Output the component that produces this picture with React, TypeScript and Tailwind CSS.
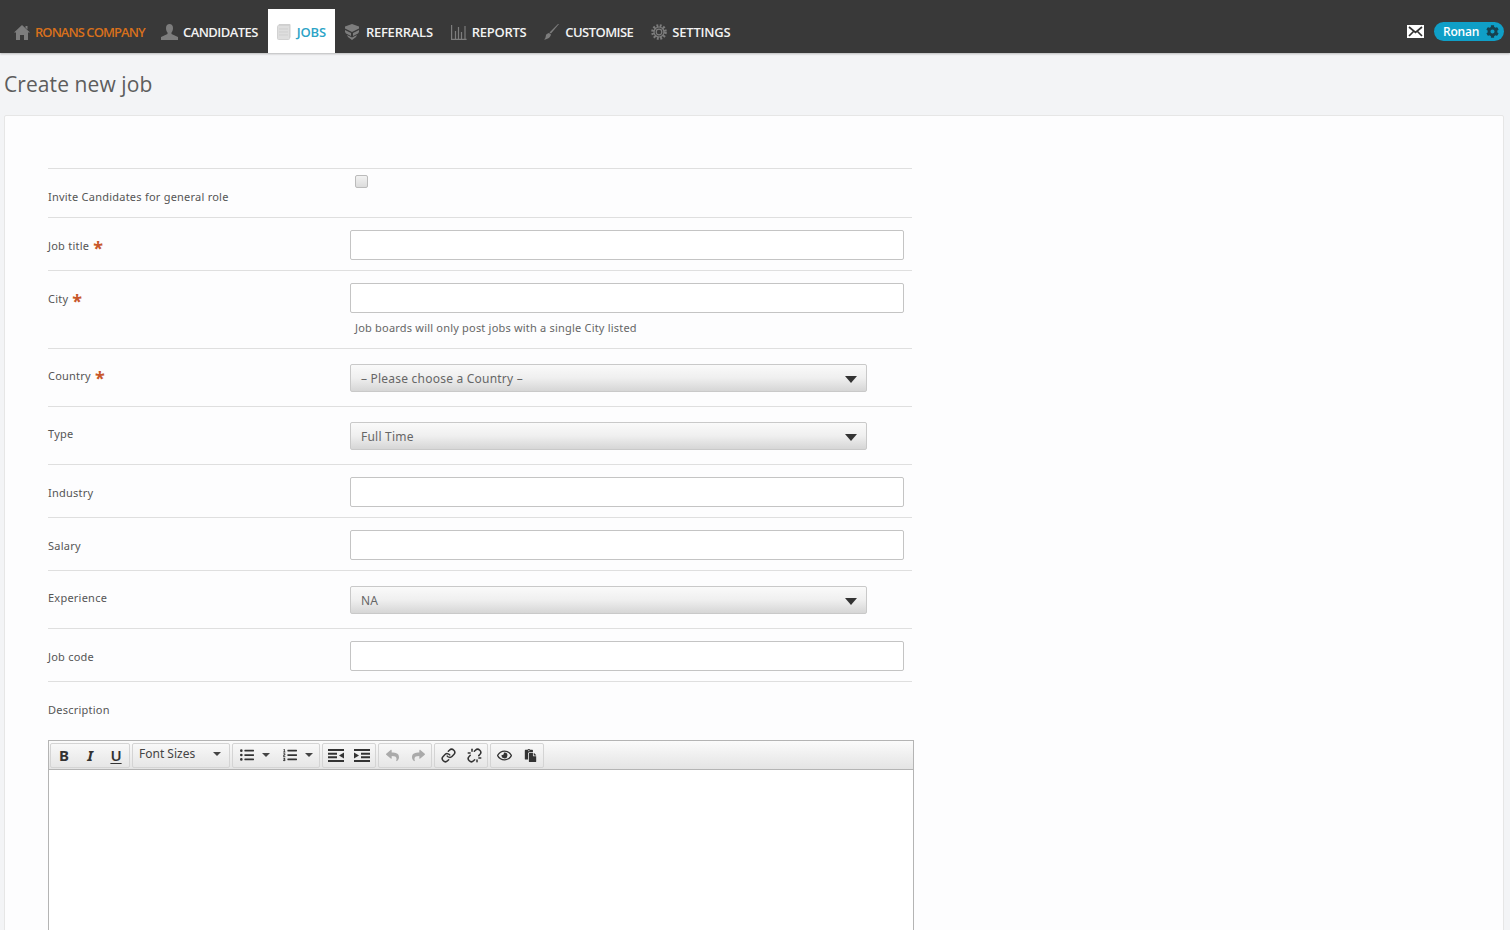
import React from "react";
import { FaCog, FaListUl, FaListOl, FaPaste, FaReply, FaShare, FaRegEye } from "react-icons/fa";
import { Link, Unlink } from "lucide-react";

const body = "font-['Noto_Sans',sans-serif]";

const Home = () => (
  <svg width="16" height="15" viewBox="0 0 16 15" fill="#7d7d7d"><path d="M8 0l8 7.500h-2V15h-4v-5H6v5H2V7.500H0L8 0z"/><path d="M11.500 1h2v3.500l-2-1.800z"/></svg>
);
const Person = () => (
  <svg width="17" height="16" viewBox="0 0 17 16" fill="#7d7d7d"><path d="M5 4c0-2.500 1.500-4 3.500-4S12 1.500 12 4c0 2-.7 3.500-1.500 4.500v1.500L17 13v3H0v-3l6.500-3V8.500C5.700 7.500 5 6 5 4z"/></svg>
);
const Doc = () => (
  <svg width="14" height="16" viewBox="0 0 14 16"><rect x="1.500" y="0" width="12" height="14" rx="1" fill="#cfcfcf"/><rect x="0.500" y="1.500" width="12" height="14" rx="1" fill="#dedede" stroke="#d2d2d2"/><path d="M2 5h9M2 8h9M2 11h9" stroke="#cfcfcf"/></svg>
);
const Ref = () => (
  <svg width="16" height="16" viewBox="0 0 16 16" fill="#7d7d7d"><path d="M8 0l7 2.500v2L8 8 1 4.500v-2z"/><path d="M1 6l6 3v3L2 9.500 1 8z"/><path d="M15 6v2l-1 1.500L9 12V9z"/><path d="M3 11l5 2.500 5-2.500-1 2-4 3-4-3z"/></svg>
);
const Bars = () => (
  <svg width="16" height="15" viewBox="0 0 16 15" fill="none" stroke="#7d7d7d" strokeWidth="1.200"><path d="M.600 0v14.400h15"/><path d="M4.500 6v8M7.500 2v12M10.500 7v7M14 1v13"/></svg>
);
const Brush = () => (
  <svg width="15" height="16" viewBox="0 0 15 16" fill="#7d7d7d"><path d="M15 0L7 9.500l-1.500-1L14 0z"/><path d="M5 9l2 1.500C6.500 13 4 15.500 0 15.500c2-1.500 1.500-3 2-4.500.5-1 2-2 3-2z"/></svg>
);
const Gear = () => (
  <svg width="16" height="16" viewBox="0 0 16 16" fill="none" stroke="#7d7d7d"><circle cx="8" cy="8" r="6.300" strokeWidth="3" strokeDasharray="1.800 1.500" /><circle cx="8" cy="8" r="5" strokeWidth="1.200"/><circle cx="8" cy="8" r="2.800" strokeWidth="1.200"/></svg>
);
const Mail = () => (
  <svg width="17" height="13" viewBox="0 0 17 13"><rect width="17" height="13" fill="#fff"/><path d="M2 2l6.500 5.500L15 2M2 11l4.500-4.500M15 11l-4.500-4.500" stroke="#333" strokeWidth="1.700" fill="none"/></svg>
);
const Outdent = () => (
  <svg width="16" height="13" viewBox="0 0 16 13" fill="#333"><path d="M0 0h16v2H0zM0 11h16v2H0zM0 3.700h9v2H0zM0 7.300h9v2H0z"/><path d="M16 3.500v6l-5-3z"/></svg>
);
const Indent = () => (
  <svg width="16" height="13" viewBox="0 0 16 13" fill="#333"><path d="M0 0h16v2H0zM0 11h16v2H0zM7 3.700h9v2H7zM7 7.300h9v2H7z"/><path d="M0 3.500v6l5-3z"/></svg>
);

function Nav({ icon, label, className }: { icon: React.ReactNode; label: string; className: string }) {
  return (
    <div className={`flex items-center pt-[2px] ${className}`}>
      {icon}
      <span className="relative top-[1px] text-[13px]">{label}</span>
    </div>
  );
}

function Label({ text, req }: { text: string; req?: boolean }) {
  return (
    <div className={`w-[302px] shrink-0 text-[11px] leading-[16px] tracking-[0.23px] text-[#555] ${body}`}>
      {text}
      {req && <span className="ml-[4px] align-[-5px] text-[18px] leading-[10px] font-bold text-[#c8572a]">*</span>}
    </div>
  );
}

function Input() {
  return <div className="h-[30px] w-[554px] rounded-[2px] border border-[#c4c4c4] bg-white" />;
}

function Select({ text }: { text: string }) {
  return (
    <div className={`flex h-[28px] w-[517px] items-center justify-between rounded-[2px] border border-[#c9c9c9] bg-gradient-to-b from-[#fafafa] via-[#efefef] to-[#d6d6d6] pl-[10px] pr-[9px] pt-[2px] text-[12px] tracking-[0.22px] text-[#666] ${body}`}>
      <span>{text}</span>
      <span className="h-0 w-0 border-x-[6px] border-t-[7px] border-x-transparent border-t-[#333]" />
    </div>
  );
}

function Group({ children, className = "" }: { children: React.ReactNode; className?: string }) {
  return (
    <div className={`flex h-[25px] items-center rounded-[2px] border border-[#d4d4d4] bg-gradient-to-b from-[#f8f8f8] to-[#e6e6e6] ${className}`}>
      {children}
    </div>
  );
}

const Btn = ({ children }: { children: React.ReactNode }) => (
  <div className="flex w-[26px] items-center justify-center text-[#333]">{children}</div>
);
const Caret = () => <span className="h-0 w-0 border-x-[4px] border-t-[4px] border-x-transparent border-t-[#444]" />;

export default function App() {
  return (
    <div className="h-screen overflow-hidden bg-[#f3f4f6]">
      <header className="flex h-[53px] items-end justify-between bg-[#393939] pl-[14px] pr-[6px] font-['Open_Sans',sans-serif] text-white shadow-[0_1px_2px_rgba(0,0,0,0.25)]">
        <div className="flex h-[44px] items-stretch">
          <Nav className="mr-[16px] w-[131px] shrink-0 gap-[5px] whitespace-nowrap font-semibold tracking-[-0.95px] text-[#d8701c]" icon={<Home />} label="RONANS COMPANY" />
          <Nav className="mr-[10px] gap-[5px] font-semibold tracking-[-0.55px] text-[#f2f2f2]" icon={<Person />} label="CANDIDATES" />
          <Nav className="mr-[9px] w-[67px] justify-center gap-[6px] bg-white font-semibold tracking-[-0.2px] text-[#2ba3c6]" icon={<Doc />} label="JOBS" />
          <Nav className="mr-[18px] gap-[6px] font-semibold tracking-[-0.25px] text-[#f2f2f2]" icon={<Ref />} label="REFERRALS" />
          <Nav className="mr-[18px] gap-[5px] font-semibold tracking-[-0.3px] text-[#f2f2f2]" icon={<Bars />} label="REPORTS" />
          <Nav className="mr-[18px] gap-[6px] font-semibold tracking-[-0.55px] text-[#f2f2f2]" icon={<Brush />} label="CUSTOMISE" />
          <Nav className="gap-[5px] font-semibold tracking-[-0.2px] text-[#f2f2f2]" icon={<Gear />} label="SETTINGS" />
        </div>
        <div className="flex h-[44px] items-center gap-[10px] pt-[1px]">
          <Mail />
          <div className="flex h-[19px] w-[70px] items-center justify-between rounded-full bg-[#0f9fc7] pl-[9px] pr-[5px] text-[12px] font-semibold tracking-[-0.2px]">
            Ronan <FaCog size={13} color="#17414f" />
          </div>
        </div>
      </header>

      <h1 className="h-[62px] pl-[4px] pt-[16px] font-['Open_Sans',sans-serif] text-[21px] leading-[30px] tracking-[0.08px] text-[#5d5d5d]">Create new job</h1>

      <main className="ml-[4px] mr-[6px] h-[900px] rounded-[2px] border border-[#e6e6e6] bg-[#fdfdfe] pl-[43px] pt-[52px]">
        <div className="w-[864px]">
          <div className="flex h-[49px] border-t border-[#dfdfdf]">
            <div className="pt-[20px]"><Label text="Invite Candidates for general role" /></div>
            <div className="ml-[5px] pt-[6px]"><div className="h-[13px] w-[13px] rounded-[2px] border border-[#bbb] bg-gradient-to-b from-[#f2f2f2] to-[#dcdcdc]" /></div>
          </div>
          <div className="flex h-[53px] border-t border-[#dfdfdf]">
            <div className="pt-[20px]"><Label text="Job title" req /></div>
            <div className="pt-[12px]"><Input /></div>
          </div>
          <div className="flex h-[78px] border-t border-[#dfdfdf]">
            <div className="pt-[20px]"><Label text="City" req /></div>
            <div className="pt-[12px]">
              <Input />
              <p className={`mt-[7px] pl-[5px] text-[11px] leading-[16px] tracking-[0.2px] text-[#666] ${body}`}>Job boards will only post jobs with a single City listed</p>
            </div>
          </div>
          <div className="flex h-[58px] border-t border-[#dfdfdf]">
            <div className="pt-[19px]"><Label text="Country" req /></div>
            <div className="pt-[15px]"><Select text="– Please choose a Country –" /></div>
          </div>
          <div className="flex h-[58px] border-t border-[#dfdfdf]">
            <div className="pt-[19px]"><Label text="Type" /></div>
            <div className="pt-[15px]"><Select text="Full Time" /></div>
          </div>
          <div className="flex h-[53px] border-t border-[#dfdfdf]">
            <div className="pt-[20px]"><Label text="Industry" /></div>
            <div className="pt-[12px]"><Input /></div>
          </div>
          <div className="flex h-[53px] border-t border-[#dfdfdf]">
            <div className="pt-[20px]"><Label text="Salary" /></div>
            <div className="pt-[12px]"><Input /></div>
          </div>
          <div className="flex h-[58px] border-t border-[#dfdfdf]">
            <div className="pt-[19px]"><Label text="Experience" /></div>
            <div className="pt-[15px]"><Select text="NA" /></div>
          </div>
          <div className="flex h-[53px] border-t border-[#dfdfdf]">
            <div className="pt-[20px]"><Label text="Job code" /></div>
            <div className="pt-[12px]"><Input /></div>
          </div>
          <div className="h-[59px] border-t border-[#dfdfdf] pt-[20px]"><Label text="Description" /></div>
        </div>

        <div className="h-[400px] w-[866px] border border-[#b4b4b4] bg-white">
          <div className={`flex h-[29px] items-center gap-[2px] border-b border-[#b4b4b4] bg-gradient-to-b from-[#fbfbfb] to-[#e4e4e4] pl-[1px] ${body}`}>
            <Group className="text-[15px] leading-none text-[#333]">
              <Btn><span className="font-bold">B</span></Btn>
              <Btn><span className="font-bold italic">I</span></Btn>
              <Btn><span className="font-semibold underline underline-offset-2">U</span></Btn>
            </Group>
            <Group className="w-[98px] justify-between pb-[2px] pl-[6px] pr-[8px] text-[12px] tracking-[0px] text-[#444]">
              Font Sizes <Caret />
            </Group>
            <Group className="w-[88px] justify-between pl-[7px] pr-[6px]">
              <FaListUl size={14} color="#333" /><Caret /><span className="ml-[6px]"><FaListOl size={14} color="#333" /></span><Caret />
            </Group>
            <Group>
              <Btn><Outdent /></Btn>
              <Btn><Indent /></Btn>
            </Group>
            <Group>
              <Btn><FaReply size={13} color="#aaa" /></Btn>
              <Btn><FaShare size={13} color="#aaa" /></Btn>
            </Group>
            <Group>
              <Btn><Link size={15} strokeWidth={2.4} /></Btn>
              <Btn><Unlink size={15} strokeWidth={2.4} /></Btn>
            </Group>
            <Group>
              <Btn><FaRegEye size={15} /></Btn>
              <Btn><FaPaste size={13} /></Btn>
            </Group>
          </div>
        </div>
      </main>
    </div>
  );
}
